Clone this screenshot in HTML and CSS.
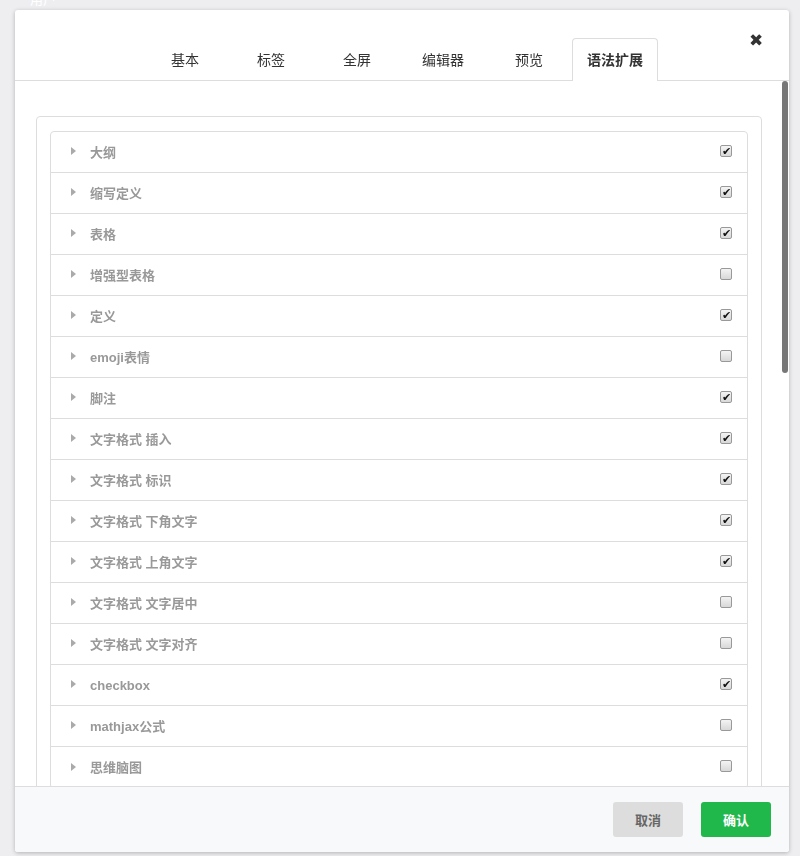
FILE: index.html
```html
<!DOCTYPE html>
<html lang="zh-CN">
<head>
    <meta charset="UTF-8">
    <title>编辑器设置</title>
    <link rel="stylesheet" href="styles.css">
</head>
<body>
    <div class="backdrop">
        <span class="bg-title">用户</span>
    </div>
    <div class="modal">
        <div class="modal-head">
            <ul class="tabs">
                <li class="tab">基本</li>
                <li class="tab">标签</li>
                <li class="tab">全屏</li>
                <li class="tab">编辑器</li>
                <li class="tab">预览</li>
                <li class="tab active">语法扩展</li>
            </ul>
            <span class="close">&#10006;</span>
        </div>
        <div class="modal-main">
            <div class="modal-body">
                <div class="panel">
                    <ul class="list">
                        <li class="row"><i class="arrow"></i><span class="name">大纲</span><span class="check on">&#10004;</span></li>
                        <li class="row"><i class="arrow"></i><span class="name">缩写定义</span><span class="check on">&#10004;</span></li>
                        <li class="row"><i class="arrow"></i><span class="name">表格</span><span class="check on">&#10004;</span></li>
                        <li class="row"><i class="arrow"></i><span class="name">增强型表格</span><span class="check"></span></li>
                        <li class="row"><i class="arrow"></i><span class="name">定义</span><span class="check on">&#10004;</span></li>
                        <li class="row"><i class="arrow"></i><span class="name">emoji表情</span><span class="check"></span></li>
                        <li class="row"><i class="arrow"></i><span class="name">脚注</span><span class="check on">&#10004;</span></li>
                        <li class="row"><i class="arrow"></i><span class="name">文字格式 插入</span><span class="check on">&#10004;</span></li>
                        <li class="row"><i class="arrow"></i><span class="name">文字格式 标识</span><span class="check on">&#10004;</span></li>
                        <li class="row"><i class="arrow"></i><span class="name">文字格式 下角文字</span><span class="check on">&#10004;</span></li>
                        <li class="row"><i class="arrow"></i><span class="name">文字格式 上角文字</span><span class="check on">&#10004;</span></li>
                        <li class="row"><i class="arrow"></i><span class="name">文字格式 文字居中</span><span class="check"></span></li>
                        <li class="row"><i class="arrow"></i><span class="name">文字格式 文字对齐</span><span class="check"></span></li>
                        <li class="row"><i class="arrow"></i><span class="name">checkbox</span><span class="check on">&#10004;</span></li>
                        <li class="row"><i class="arrow"></i><span class="name">mathjax公式</span><span class="check"></span></li>
                        <li class="row"><i class="arrow"></i><span class="name">思维脑图</span><span class="check"></span></li>
                    </ul>
                </div>
            </div>
            <!-- 自绘滚动条，盖在内容右侧 -->
            <div class="scrollbar"><div class="thumb"></div></div>
        </div>
        <div class="modal-foot">
            <button class="btn btn-cancel">取消</button>
            <button class="btn btn-ok">确认</button>
        </div>
    </div>
</body>
</html>
```

FILE: styles.css
```css
*{
    margin:0;
    padding:0;
    box-sizing:border-box;
}
html,body{
    height:100%;
}
body{
    background-color:#eeeef1;
    font-family:"Liberation Sans","Noto Sans CJK SC",sans-serif;
    overflow:hidden;
}
ul{
    list-style:none;
}
.backdrop{
    height:100%;
}
.bg-title{
    display:block;
    padding-left:30px;
    margin-top:-8px;
    color:#fff;
    font-size:13px;
    line-height:16px;
}
/* 弹窗盖在页面上 */
.modal{
    position:fixed;
    top:10px;
    left:15px;
    width:774px;
    height:842px;
    display:flex;
    flex-direction:column;
    background-color:#fff;
    border-radius:3px;
    box-shadow:0 1px 4px rgba(0,0,0,.25);
    overflow:hidden;
}
.modal-head{
    position:relative;
    height:71px;
    flex-shrink:0;
    border-bottom:1px solid #ddd;
}
.tabs{
    display:flex;
    justify-content:center;
    align-items:flex-end;
    height:70px;
    padding-right:4px;
}
.tab{
    width:86px;
    height:43px;
    margin-bottom:-1px;
    line-height:42px;
    text-align:center;
    font-size:14px;
    color:#333;
    border:1px solid transparent;
    border-bottom:none;
    border-radius:4px 4px 0 0;
}
.tab.active{
    font-weight:bold;
    background-color:#fff;
    border-color:#ddd;
}
.close{
    position:absolute;
    top:21px;
    right:26px;
    font-size:17px;
    color:#333;
    line-height:20px;
}
.modal-main{
    position:relative;
    flex:1;
    overflow:hidden;
}
.modal-body{
    height:100%;
    overflow:hidden;
    padding:35px 27px 35px 21px;
}
.scrollbar{
    position:absolute;
    top:0;
    right:0;
    width:8px;
    height:100%;
    background-color:#fff;
}
.thumb{
    width:6px;
    height:292px;
    margin-left:1px;
    background-color:#777;
    border-radius:3px;
}
.panel{
    border:1px solid #ddd;
    border-radius:4px;
    padding:14px 13px;
}
.list{
    border:1px solid #ddd;
    border-radius:4px;
}
.row{
    display:flex;
    align-items:center;
    height:41px;
    padding:0 15px 0 20px;
    border-bottom:1px solid #ddd;
}
.row:last-child{
    border-bottom:none;
}
.arrow{
    width:0;
    height:0;
    border-left:5px solid #aaa;
    border-top:4px solid transparent;
    border-bottom:4px solid transparent;
    margin-right:14px;
    margin-bottom:2px;
}
.name{
    flex:1;
    font-size:13px;
    line-height:18px;
    padding-top:1px;
    font-weight:bold;
    color:#999;
}
.check{
    width:12px;
    height:12px;
    margin-bottom:3px;
    border:1px solid #999;
    border-radius:2px;
    background:linear-gradient(#f4f4f4,#d8d8d8);
    font-size:11px;
    line-height:10px;
    text-align:center;
    color:#111;
}
.modal-foot{
    height:66px;
    flex-shrink:0;
    display:flex;
    justify-content:flex-end;
    gap:18px;
    padding:15px 18px 0 0;
    background-color:#f8f9fb;
    border-top:1px solid #ddd;
}
.btn{
    width:70px;
    height:35px;
    border:none;
    border-radius:3px;
    font-family:"Liberation Sans","Noto Sans CJK SC",sans-serif;
    font-size:13px;
    font-weight:bold;
}
.btn-cancel{
    background-color:#dddddd;
    color:#666;
}
.btn-ok{
    background-color:#21b84b;
    color:#fff;
}
```
